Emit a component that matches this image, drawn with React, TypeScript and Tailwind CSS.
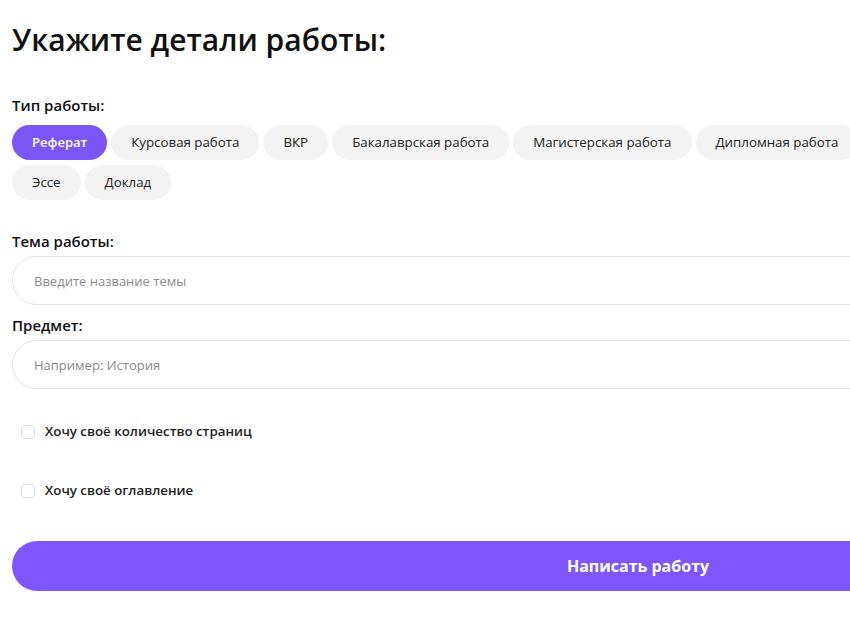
import { useState } from "react";

const TYPES = [
  "Реферат",
  "Курсовая работа",
  "ВКР",
  "Бакалаврская работа",
  "Магистерская работа",
  "Дипломная работа",
  "Эссе",
  "Доклад",
];

export default function App() {
  const [active, setActive] = useState(0);
  const [pages, setPages] = useState(false);
  const [toc, setToc] = useState(false);

  return (
    <div className="w-[850px] h-[618px] overflow-hidden bg-white" style={{ fontFamily: "'Open Sans', sans-serif" }}>
      <div className="w-[1276px] px-3 pt-[20px] text-[#111]">
        <h1 className="text-[30px] leading-[40px] font-semibold">Укажите детали работы:</h1>

        <p className="mt-[35px] text-[15px] leading-[20px] font-semibold">Тип работы:</p>
        <div className="mt-[10px] flex flex-wrap gap-x-1 gap-y-[5px] max-w-[900px]">
          {TYPES.map((t, i) => (
            <button
              key={t}
              onClick={() => setActive(i)}
              className={`h-[35px] px-5 rounded-full ${
                i === active ? "bg-[#7b55f6] text-white text-[13px] font-semibold" : "bg-[#f3f3f3] text-[#222] text-[13.3px]"
              }`}
            >
              {t}
            </button>
          ))}
        </div>

        <p className="mt-[31px] text-[15px] leading-[20px] font-semibold">Тема работы:</p>
        <input
          className="mt-[5px] w-full h-[49px] rounded-full border border-[#e2e2e2] px-[21px] text-[13px] outline-none placeholder:text-[#8a8a8a]"
          placeholder="Введите название темы"
        />

        <p className="mt-[10px] text-[15px] leading-[20px] font-semibold">Предмет:</p>
        <input
          className="mt-[5px] w-full h-[49px] rounded-full border border-[#e2e2e2] px-[21px] text-[13px] outline-none placeholder:text-[#8a8a8a]"
          placeholder="Например: История"
        />

        <label className="mt-[33px] ml-[9px] flex items-center gap-[10px] h-[20px] cursor-pointer">
          <span
            onClick={() => setPages(!pages)}
            className={`w-[14px] h-[14px] rounded-[4px] border ${pages ? "bg-[#7b55f6] border-[#7b55f6]" : "border-[#dcdcdc]"}`}
          />
          <span className="text-[13.3px] font-semibold text-[#222]">Хочу своё количество страниц</span>
        </label>

        <label className="mt-[39px] ml-[9px] flex items-center gap-[10px] h-[20px] cursor-pointer">
          <span
            onClick={() => setToc(!toc)}
            className={`w-[14px] h-[14px] rounded-[4px] border ${toc ? "bg-[#7b55f6] border-[#7b55f6]" : "border-[#dcdcdc]"}`}
          />
          <span className="text-[13.3px] font-semibold text-[#222]">Хочу своё оглавление</span>
        </label>

        <button className="mt-[40px] w-full h-[50px] rounded-full bg-[#7f56fe] text-white text-[16px] font-bold">
          Написать работу
        </button>
      </div>
    </div>
  );
}
